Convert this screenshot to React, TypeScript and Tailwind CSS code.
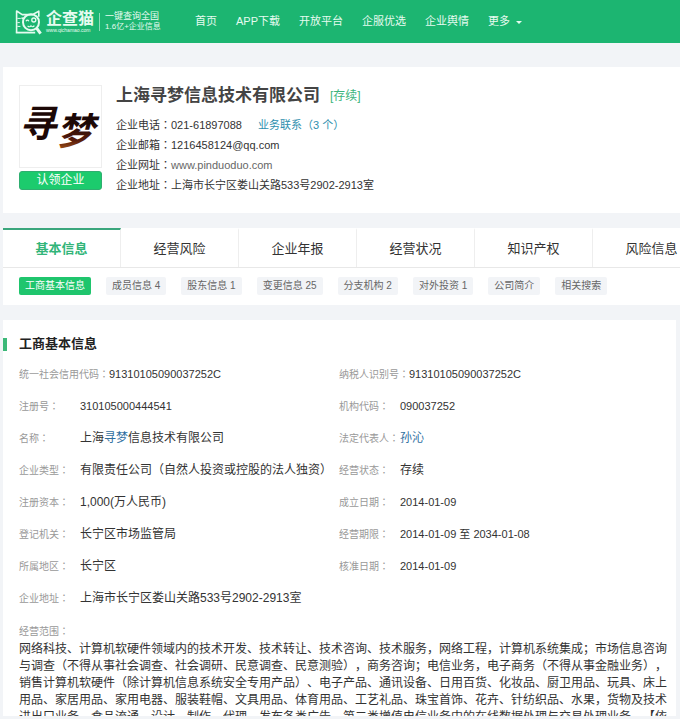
import type { ReactNode } from 'react'
import clsx from 'clsx'

const NAV_ITEMS = ['首页', 'APP下载', '开放平台', '企服优选', '企业舆情']

const TABS = ['基本信息', '经营风险', '企业年报', '经营状况', '知识产权', '风险信息']

const SECTIONS: { name: string; count?: number }[] = [
  { name: '工商基本信息' },
  { name: '成员信息', count: 4 },
  { name: '股东信息', count: 1 },
  { name: '变更信息', count: 25 },
  { name: '分支机构', count: 2 },
  { name: '对外投资', count: 1 },
  { name: '公司简介' },
  { name: '相关搜索' },
]

const SCOPE =
  '网络科技、计算机软硬件领域内的技术开发、技术转让、技术咨询、技术服务，网络工程，计算机系统集成；市场信息咨询与调查（不得从事社会调查、社会调研、民意调查、民意测验），商务咨询；电信业务，电子商务（不得从事金融业务），销售计算机软硬件（除计算机信息系统安全专用产品）、电子产品、通讯设备、日用百货、化妆品、厨卫用品、玩具、床上用品、家居用品、家用电器、服装鞋帽、文具用品、体育用品、工艺礼品、珠宝首饰、花卉、针纺织品、水果，货物及技术进出口业务、食品流通、设计、制作、代理、发布各类广告、第二类增值电信业务中的在线数据处理与交易处理业务。【依'

// Двоеточие по центру кегельной площадки
function Colon() {
  return (
    <span lang="ja" className="font-['Noto_Sans_CJK_JP',sans-serif] leading-none">：</span>
  )
}

interface FieldProps {
  label: string
  children: ReactNode
  wide?: boolean
  numeric?: boolean
}

function Field({ label, children, wide, numeric }: FieldProps) {
  return (
    <div className={clsx('flex h-8 items-center whitespace-nowrap', wide && 'col-span-2')}>
      <dt className="min-w-[61px] text-[10px] text-[#999]">{label}<Colon /></dt>
      <dd className={clsx('text-[#333]', numeric ? 'text-[11px]' : 'text-[12px]')}>{children}</dd>
    </div>
  )
}

function CatLogo() {
  return (
    <svg viewBox="0 0 27 26" className="h-[26px] w-[27px]" fill="none" stroke="#e6fbf0" strokeWidth="1.6">
      <path d="M1.6 23.6V2l5.6 3.6h10.2l6.4-3.4v5.6" strokeLinejoin="round" />
      <path d="M.8 23.6h19.4" strokeWidth="1.8" />
      <path d="M2.4 9.4h3.4M2.4 13.6h2.4M2.4 17.4h3" strokeWidth="1" />
      <circle cx="16" cy="13.2" r="8" strokeWidth="2" />
      <path d="m21.6 19.2 4 5.4" strokeWidth="3" />
      <path d="M6.4 9.2h3" strokeWidth="1.6" />
      <path d="M11 12.2c.6-1.4 2.2-1.4 2.8 0" strokeWidth="1.2" />
      <circle cx="18.8" cy="11" r="2" strokeWidth="1.3" />
      <path d="M12.6 16.8c1.2 1.4 2.8 1.2 3.4 0 .8 1.2 2.4 1.2 3.4-.2" strokeWidth="1.1" />
    </svg>
  )
}

function Header() {
  return (
    <header className="flex h-[43px] shrink-0 items-center bg-[#1cb571] pl-[15px] text-[#e6fbf0]">
      <a href="#" className="flex items-center">
        <CatLogo />
        <span className="ml-1 flex flex-col">
          <span className="text-[16px] leading-[18px] font-bold">企查猫</span>
          <span className="text-[5px] leading-[5px]">www.qichamao.com</span>
        </span>
        <span className="ml-[5px] h-[18px] w-px bg-[#8fdcb8]" />
        <span className="ml-[5px] flex w-[60px] flex-col whitespace-nowrap">
          <span className="text-[9px] leading-[10px]">一键查询全国</span>
          <span className="text-[8px] leading-[11px]">1.6亿+企业信息</span>
        </span>
      </a>
      <nav className="ml-[30px] flex gap-[19px] text-[11px] whitespace-nowrap">
        {NAV_ITEMS.map(item => (
          <a key={item} href="#">{item}</a>
        ))}
        <button type="button" className="flex items-center gap-1.5">
          更多
          <svg viewBox="0 0 6 3" className="mt-0.5 h-[3px] w-1.5" fill="currentColor">
            <path d="M0 0h6L3 3z" />
          </svg>
        </button>
      </nav>
    </header>
  )
}

// Логотип компании
function CompanyLogo() {
  return (
    <svg viewBox="0 0 82 82" className="h-[83px] w-[83px] border border-[#eee]" role="img" aria-label="寻梦">
      <defs>
        <linearGradient id="ink" x1="0" y1="0" x2="0" y2="1">
          <stop offset="0.3" stopColor="#1c0806" />
          <stop offset="0.7" stopColor="#5a1d0c" />
          <stop offset="1" stopColor="#c06a1c" />
        </linearGradient>
      </defs>
      <g fontWeight="bold" fontStyle="italic" fontSize="38">
        <text x="-1" y="52" fill="#1c0806">寻</text>
        <text x="37" y="60" fill="url(#ink)">梦</text>
      </g>
    </svg>
  )
}

function CompanyCard() {
  return (
    <section className="flex gap-[14px] bg-white px-4 pt-[18px] pb-[18px]">
      <div className="flex w-[83px] shrink-0 flex-col gap-[3px]">
        <CompanyLogo />
        <button type="button" className="h-[19px] rounded-[3px] border border-[#2fae70] bg-[#1ccb6d] text-[12px] leading-[17px] text-white">
          认领企业
        </button>
      </div>
      <div className="text-[11px] leading-5 whitespace-nowrap text-[#333]">
        <div className="mb-2 flex items-center gap-[10px]">
          <h1 className="text-[17px] leading-[22px] font-bold text-[#444]">上海寻梦信息技术有限公司</h1>
          <span className="text-[12px] leading-5 text-[#3cb47c]">[存续]</span>
        </div>
        <p>
          企业电话<Colon />021-61897088
          <a href="#" className="ml-4 text-[#2e8fae]">业务联系（3 个）</a>
        </p>
        <p>企业邮箱<Colon />1216458124@qq.com</p>
        <p>
          企业网址<Colon /><a href="#" className="text-[#666]">www.pinduoduo.com</a>
        </p>
        <p>企业地址<Colon />上海市长宁区娄山关路533号2902-2913室</p>
      </div>
    </section>
  )
}

function TabsCard() {
  return (
    <section className="shrink-0 overflow-hidden bg-white whitespace-nowrap">
      <div className="flex h-10 border-b border-[#e8e8e8]">
        {TABS.map((tab, i) => (
          <button
            key={tab}
            type="button"
            className={clsx(
              'w-[118px] shrink-0 border-r border-t-2 border-r-[#eee] text-[13px]',
              i === 0 ? 'border-t-[#3aa67c] font-bold text-[#32b579]' : 'border-t-transparent text-[#333]'
            )}
          >
            {tab}
          </button>
        ))}
      </div>
      <div className="flex gap-[15px] px-4 pt-[9px] pb-[10px]">
        {SECTIONS.map((s, i) => (
          <a
            key={s.name}
            href="#"
            className={clsx(
              'rounded-[2px] px-1.5 text-[10px] leading-[18px]',
              i === 0 ? 'bg-[#1fc56d] text-white' : 'bg-[#f2f4f7] text-[#666]'
            )}
          >
            {s.name}
            {s.count !== undefined && ` ${s.count}`}
          </a>
        ))}
      </div>
    </section>
  )
}

function BasicInfo() {
  return (
    <section className="mr-1 min-h-0 flex-1 overflow-hidden bg-white pt-[14px]">
      <div className="flex items-center">
        <span className="h-[13px] w-1 bg-[#3cb878]" />
        <h2 className="ml-3 text-[13px] leading-5 font-bold text-[#222]">工商基本信息</h2>
      </div>
      <dl className="mt-1 grid grid-cols-[320px_1fr] pl-4">
        <Field label="统一社会信用代码" numeric>91310105090037252C</Field>
        <Field label="纳税人识别号" numeric>91310105090037252C</Field>
        <Field label="注册号" numeric>310105000444541</Field>
        <Field label="机构代码" numeric>090037252</Field>
        <Field label="名称">
          上海<a href="#" className="text-[#2f6f9f]">寻梦</a>信息技术有限公司
        </Field>
        <Field label="法定代表人">
          <a href="#" className="text-[#2f6f9f]">孙沁</a>
        </Field>
        <Field label="企业类型">有限责任公司（自然人投资或控股的法人独资）</Field>
        <Field label="经营状态">存续</Field>
        <Field label="注册资本">1,000(万人民币)</Field>
        <Field label="成立日期" numeric>2014-01-09</Field>
        <Field label="登记机关">长宁区市场监管局</Field>
        <Field label="经营期限" numeric>2014-01-09 至 2034-01-08</Field>
        <Field label="所属地区">长宁区</Field>
        <Field label="核准日期" numeric>2014-01-09</Field>
        <Field label="企业地址" wide>上海市长宁区娄山关路533号2902-2913室</Field>
      </dl>
      <div className="mt-[9px] pr-1 pl-4">
        <h3 className="text-[10px] leading-[18px] text-[#999]">经营范围<Colon /></h3>
        <p className="text-[12px] leading-[17px] text-[#333] [text-spacing-trim:space-all]">{SCOPE}</p>
      </div>
    </section>
  )
}

export default function App() {
  return (
    <div className="flex h-screen flex-col overflow-hidden bg-[#f2f4f7] pb-[3px] font-['Liberation_Sans','Noto_Sans_CJK_SC',sans-serif]">
      <Header />
      <main className="flex min-h-0 flex-1 flex-col gap-[15px] pt-6 pl-[3px]">
        <CompanyCard />
        <TabsCard />
        <BasicInfo />
      </main>
    </div>
  )
}
